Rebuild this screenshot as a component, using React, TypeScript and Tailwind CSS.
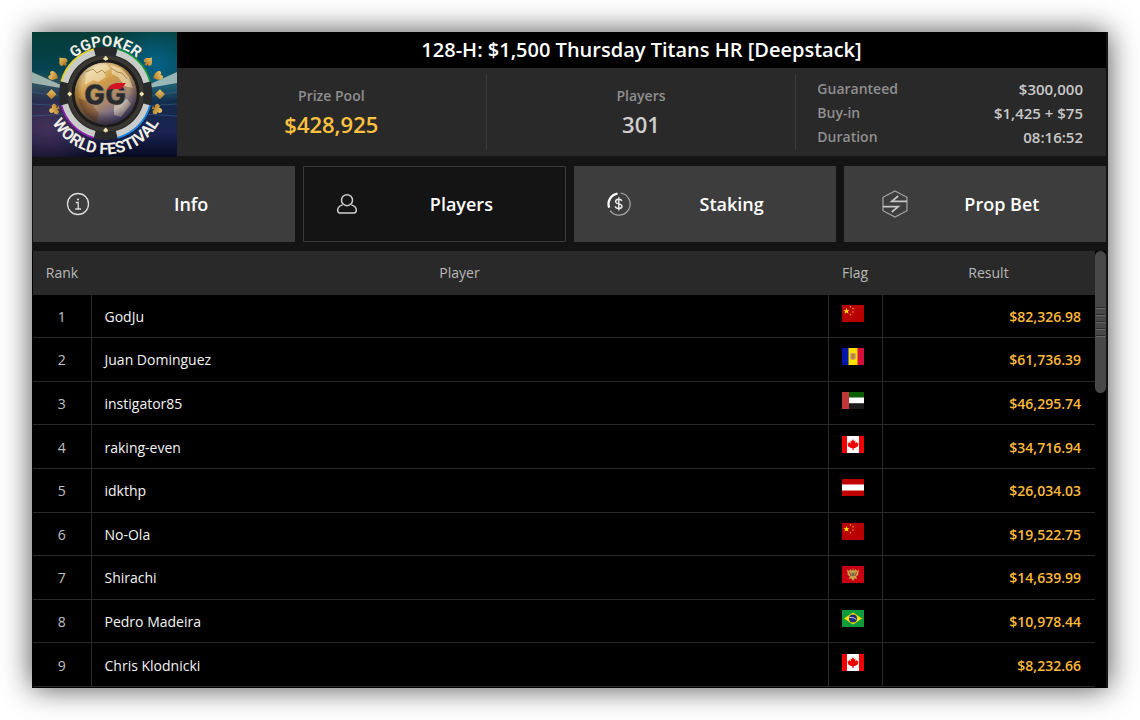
import React from "react";

type FlagCode = "cn" | "ad" | "ae" | "ca" | "at" | "me" | "br";

interface PlayerRow {
  rank: number;
  name: string;
  flag: FlagCode;
  result: string;
}

const players: PlayerRow[] = [
  { rank: 1, name: "GodJu", flag: "cn", result: "$82,326.98" },
  { rank: 2, name: "Juan Dominguez", flag: "ad", result: "$61,736.39" },
  { rank: 3, name: "instigator85", flag: "ae", result: "$46,295.74" },
  { rank: 4, name: "raking-even", flag: "ca", result: "$34,716.94" },
  { rank: 5, name: "idkthp", flag: "at", result: "$26,034.03" },
  { rank: 6, name: "No-Ola", flag: "cn", result: "$19,522.75" },
  { rank: 7, name: "Shirachi", flag: "me", result: "$14,639.99" },
  { rank: 8, name: "Pedro Madeira", flag: "br", result: "$10,978.44" },
  { rank: 9, name: "Chris Klodnicki", flag: "ca", result: "$8,232.66" },
];

const flagNames: Record<FlagCode, string> = {
  cn: "China",
  ad: "Andorra",
  ae: "United Arab Emirates",
  ca: "Canada",
  at: "Austria",
  me: "Montenegro",
  br: "Brazil",
};

const flagArt: Record<FlagCode, React.ReactNode> = {
  cn: (
    <>
      <rect width="22" height="17" fill="#b80000" />
      <path d="M4.500 3l.9 2.200h2.200l-1.700 1.300.6 2.200-2-1.300-2 1.300.6-2.200-1.700-1.300h2.200z" fill="#ffe000" />
      <g fill="#e8b000">
        <circle cx="8.500" cy="1.700" r=".8" />
        <circle cx="11" cy="3.800" r=".8" />
        <circle cx="11" cy="7" r=".8" />
        <circle cx="8.500" cy="9.800" r=".8" />
      </g>
    </>
  ),
  ad: (
    <>
      <rect width="22" height="17" fill="#ffe100" />
      <rect width="6.500" height="17" fill="#0018a8" />
      <rect x="15.500" width="6.500" height="17" fill="#d50f3c" />
      <rect x="8.200" y="5" width="5.600" height="6.500" rx="1.500" fill="#c89a5c" />
      <path d="M9.500 7h3M9.500 9.500h3M11 5.500v6" stroke="#a06a3c" strokeWidth=".7" />
    </>
  ),
  ae: (
    <>
      <rect width="22" height="6" fill="#0a5c00" />
      <rect y="5.500" width="22" height="6" fill="#fff" />
      <rect y="11.500" width="22" height="5.500" fill="#1b1b1b" />
      <rect width="7" height="17" fill="#c03535" />
    </>
  ),
  ca: (
    <>
      <rect width="22" height="17" fill="#fff" />
      <rect width="5" height="17" fill="#f00000" />
      <rect x="17" width="5" height="17" fill="#f00000" />
      <path d="M11 3l1.200 2.200 1.300-.6-.3 2.600L15 6l.5 1.300 1.300.2-1 1.800.6.7-3.400 2-1.400.2V14h-1.200v-1.800l-1.400-.2-3.400-2 .6-.7-1-1.800 1.300-.2L7 6l1.800 1.200-.3-2.600 1.300.6z" fill="#f00000" />
    </>
  ),
  at: (
    <>
      <rect width="22" height="17" fill="#c00000" />
      <rect y="5.500" width="22" height="6" fill="#fff" />
    </>
  ),
  me: (
    <>
      <rect width="22" height="17" fill="#c80012" />
      <path d="M5 3.500l2 1.500 1.500-2L10 5l1-3 1 3 1.500-2L15 5l2-1.500-.8 5.500-2 1.500 1 2.500-2.500-.5L11 15l-1.700-2.500-2.500.5 1-2.500-2-1.500z" fill="#c9a04a" />
      <path d="M7.500 6l1.500 4M14.500 6L13 10" stroke="#c80012" strokeWidth=".7" />
      <rect x="9.700" y="6.800" width="2.600" height="3.200" fill="#55705e" />
    </>
  ),
  br: (
    <>
      <rect width="22" height="17" fill="#0f9a3c" />
      <path d="M11 2.500l9 6-9 6-9-6z" fill="#f8e000" />
      <circle cx="11" cy="8.500" r="4" fill="#1f2c7a" />
      <path d="M7.300 7.600c2.500-.5 5 .1 7 2" stroke="#d5dcf0" strokeWidth=".9" fill="none" />
    </>
  ),
};

function Flag({ code }: { code: FlagCode }) {
  return (
    <svg className="block h-[17px] w-[22px]" viewBox="0 0 22 17" role="img" aria-label={flagNames[code]}>
      {flagArt[code]}
    </svg>
  );
}

const heart = "M0 4.500C-5.500.5-4.500-4-2-4-.8-4-.2-3 0-2.400.2-3 .8-4 2-4 4.500-4 5.500.5 0 4.500z";
const spade = "M0-5C1.500-2.500 4.500-1 4.500 1.300 4.500 3.800 1.500 4 .6 2.400L1.600 5h-3.200l1-2.600C-1.500 4-4.500 3.800-4.500 1.300-4.500-1-1.500-2.500 0-5z";
const diamond = "M0-5L5 0 0 5-5 0z";
const club = "M0-4.800a2.300 2.300 0 0 1 2 3.500A2.300 2.300 0 1 1 .7 2.200L1.500 4.800h-3L-.7 2.200A2.300 2.300 0 1 1-2-1.300 2.300 2.300 0 0 1 0-4.800z";

const rimArcs = [
  { d: "M32.600 50.400A42.500 42.500 0 0 1 62.700 20.300", edge: "M29.300 49.500A46 46 0 0 1 61.800 17", color: "#e4d12a" },
  { d: "M84.700 20.300A42.500 42.500 0 0 1 114.800 50.400", edge: "M85.600 17A46 46 0 0 1 118.100 49.500", color: "#169a35" },
  { d: "M114.800 72.400A42.500 42.500 0 0 1 84.700 102.500", edge: "M118.100 73.300A46 46 0 0 1 85.600 105.800", color: "#1684e0" },
  { d: "M62.700 102.500A42.500 42.500 0 0 1 32.600 72.400", edge: "M61.800 105.800A46 46 0 0 1 29.300 73.300", color: "#8a1fae" },
];

const suits = [
  { d: spade, left: "translate(30.700 29.300) rotate(-42)", right: "translate(116.700 29.300) rotate(42)" },
  { d: heart, left: "translate(21.500 44) rotate(-66) scale(1.100)", right: "translate(125.900 44) rotate(66) scale(1.100)" },
  { d: diamond, left: "translate(19.500 62.300)", right: "translate(127.900 62.300)" },
  { d: club, left: "translate(22.300 77.500) rotate(-112) scale(1.100)", right: "translate(125.100 77.500) rotate(112) scale(1.100)" },
];

function FestivalLogo() {
  return (
    <svg className="block h-[125px] w-[145px] shrink-0" viewBox="0 0 145 125" role="img" aria-label="GGPoker World Festival">
      <defs>
        <linearGradient id="sky" x1="0" y1="0" x2="0" y2="1">
          <stop offset="0" stopColor="#053c36" />
          <stop offset=".3" stopColor="#064350" />
          <stop offset=".43" stopColor="#2c5864" />
          <stop offset=".55" stopColor="#142a48" />
          <stop offset=".8" stopColor="#1b2352" />
          <stop offset="1" stopColor="#060a22" />
        </linearGradient>
        <radialGradient id="purple" cx=".1" cy=".75" r=".4">
          <stop offset="0" stopColor="#4d3358" stopOpacity=".8" />
          <stop offset="1" stopColor="#4d3358" stopOpacity="0" />
        </radialGradient>
        <radialGradient id="blue" cx=".85" cy=".25" r=".35">
          <stop offset="0" stopColor="#046a94" stopOpacity=".8" />
          <stop offset="1" stopColor="#046a94" stopOpacity="0" />
        </radialGradient>
        <linearGradient id="globe" x1=".2" y1="0" x2=".75" y2="1">
          <stop offset="0" stopColor="#f0e0b4" />
          <stop offset=".35" stopColor="#d09c48" />
          <stop offset=".62" stopColor="#a8886c" />
          <stop offset="1" stopColor="#4450a8" />
        </linearGradient>
        <radialGradient id="shade" cx=".5" cy=".42" r=".58">
          <stop offset=".65" stopColor="#20100a" stopOpacity="0" />
          <stop offset="1" stopColor="#20100a" stopOpacity=".65" />
        </radialGradient>
        <linearGradient id="gold" x1="0" y1="0" x2="0" y2="1">
          <stop offset="0" stopColor="#ecc466" />
          <stop offset="1" stopColor="#b07a26" />
        </linearGradient>
        <path id="arcTop" d="M26.700 61.300a47 47 0 0 1 94 0" />
        <path id="arcBottom" d="M12.700 61.300a61 61 0 0 0 122 0" />
      </defs>
      <rect width="145" height="125" fill="url(#sky)" />
      <rect width="145" height="125" fill="url(#purple)" />
      <rect width="145" height="125" fill="url(#blue)" />
      <path d="M0 40l40 18-40-7zM145 40l-40 18 40-7z" fill="#dfe8d8" opacity=".65" />
      <path d="M0 60l34 5M0 72l34 2M145 60l-34 5M145 72l-34 2M0 84l34-2M145 84l-34-2" stroke="#3c6a94" opacity=".5" />
      <circle cx="73.700" cy="61.400" r="42" fill="#161718" stroke="#28292a" strokeWidth="9" />
      {rimArcs.map((arc) => (
        <g key={arc.color} fill="none">
          <path d={arc.d} stroke="#c9cbc9" strokeWidth="7" />
          <path d={arc.edge} stroke={arc.color} strokeWidth="1.800" />
        </g>
      ))}
      <circle cx="73.700" cy="61.400" r="36" fill="#1c1c1c" stroke="#3a3632" strokeWidth="4" />
      <circle cx="73.700" cy="61.400" r="31" fill="url(#globe)" />
      <path d="M54 40c6-8 14-10 20-8l4 5-6 3 2 5-8 5-5-2-8 5zM79 33l10 3 8 9 4 11-8-2-7-9-6-3zM82 70l13-3 4 5-10 13-7-2z" fill="#f8ecc8" opacity=".55" />
      <path d="M54 40l7-3 4 4 5-3 3 3M79 36l6 4 5 1 5 6" stroke="#8a6428" strokeWidth=".8" fill="none" opacity=".8" />
      <path d="M46 66l12 4 9 12-3 8c-9-4-15-12-18-24z" fill="#7c4a1c" opacity=".5" />
      <circle cx="73.700" cy="61.400" r="31" fill="url(#shade)" />
      <g fill="#f3e3b0">
        <path d={club} transform="translate(73.700 26.300) scale(.5)" />
        <path d={diamond} transform="translate(37.700 62) scale(.5)" />
        <path d={diamond} transform="translate(109.700 62) scale(.5)" />
        <path d={spade} transform="translate(73.700 98) scale(.5)" />
      </g>
      {suits.map((suit) => (
        <g key={suit.left} fill="url(#gold)">
          <path d={suit.d} transform={suit.left} />
          <path d={suit.d} transform={suit.right} />
        </g>
      ))}
      <text x="73" y="73" textAnchor="middle" fontFamily="Inter, sans-serif" fontWeight="900" fontSize="28" fill="#2b2a2d" stroke="#8c7f72" strokeWidth=".6">
        GG
      </text>
      <path d="M75 58l4-5 5-2h10l-5 6h-9z" fill="#d21522" />
      <g fontFamily="Roboto, sans-serif" fontWeight="700" fill="#f1efe6" textAnchor="middle">
        <text fontSize="15">
          <textPath href="#arcTop" startOffset="50%">GGPOKER</textPath>
        </text>
        <text fontSize="16">
          <textPath href="#arcBottom" startOffset="50%">WORLD FESTIVAL</textPath>
        </text>
      </g>
    </svg>
  );
}

function InfoIcon() {
  return (
    <svg className="size-6" viewBox="-12 -12 24 24" fill="none" stroke="#dcdcdc" strokeWidth="1.300" aria-hidden="true">
      <circle r="10.500" />
      <path d="M-2.300-1.500H.2V5M-2.800 5h5.800" />
      <circle cy="-4.500" r="1.100" fill="#dcdcdc" stroke="none" />
    </svg>
  );
}

function PlayersIcon() {
  return (
    <svg className="size-6" viewBox="-11 -12 24 24" fill="none" stroke="#cfcfcf" strokeWidth="1.500" strokeLinejoin="round" aria-hidden="true">
      <circle cy="-3.800" r="5.500" />
      <path d="M-4.300 .9C-7.300 1.700-9.300 3.700-9.300 6.200c0 1.700.9 2.700 2.300 2.700H7c1.400 0 2.300-1 2.300-2.700C9.300 3.700 7.300 1.700 4.300.9" />
    </svg>
  );
}

function StakingIcon() {
  return (
    <svg className="size-6" viewBox="-12 -12 24 24" fill="none" aria-hidden="true">
      <path d="M1.500-11A11.100 11.100 0 1 1-8.900 6.600" stroke="#a8a8a8" strokeWidth="1.200" />
      <path d="M-9.800 3.600A10.400 10.400 0 0 1-1.500-10.300" stroke="#fff" strokeWidth="2.300" />
      <path d="M2.900-3C2.500-4.200 1.200-4.700-.3-4.700-2-4.700-3.400-4-3.400-2.500c0 3.200 6.400 1.500 6.400 4.700C3 3.700 1.600 4.500-.2 4.500c-1.900 0-3.200-.8-3.500-2.200M-.2-6.800V6.600" stroke="#f0f0f0" strokeWidth="1.400" />
    </svg>
  );
}

function PropBetIcon() {
  return (
    <svg className="size-7" viewBox="-14 -14 28 28" fill="none" aria-hidden="true">
      <path d="M0-13L12-6.700V6.700L0 13-12 6.700V-6.700z" stroke="#a6a6a6" strokeWidth="1.200" />
      <path d="M12-2.700H-3.200L3.200-8M-12 2.700H3.200L-3.200 8" stroke="#c6c6c6" strokeWidth="1.700" />
    </svg>
  );
}

const tabs = [
  { label: "Info", icon: <InfoIcon />, active: false },
  { label: "Players", icon: <PlayersIcon />, active: true },
  { label: "Staking", icon: <StakingIcon />, active: false },
  { label: "Prop Bet", icon: <span className="pl-3"><PropBetIcon /></span>, active: false },
];

const details = [
  { label: "Guaranteed", value: "$300,000" },
  { label: "Buy-in", value: "$1,425 + $75" },
  { label: "Duration", value: "08:16:52" },
];

export default function App() {
  return (
    <div className="flex h-screen bg-white p-8 font-['Open_Sans','Noto_Sans',sans-serif]">
      <main className="flex min-w-0 flex-1 flex-col overflow-hidden bg-[#141414] pr-0.5 shadow-[0_0_28px_rgba(0,0,0,0.7)]">
        <header className="flex">
          <FestivalLogo />
          <div className="flex min-w-0 flex-1 flex-col pb-px">
            <h1 className="bg-black text-center text-xl leading-9 font-semibold text-white">
              128-H: $1,500 Thursday Titans HR [Deepstack]
            </h1>
            <div className="grid flex-1 grid-cols-3 bg-[#292929] py-1.5">
              <dl className="flex flex-col items-center justify-center border-r border-[#3a3a3a] font-semibold">
                <dt className="text-sm leading-6 text-[#8f8f8f]">Prize Pool</dt>
                <dd className="text-[22px] leading-8 text-[#fdc142]">$428,925</dd>
              </dl>
              <dl className="flex flex-col items-center justify-center border-r border-[#3a3a3a] font-semibold">
                <dt className="text-sm leading-6 text-[#8f8f8f]">Players</dt>
                <dd className="text-[22px] leading-8 text-[#cfcfcf]">301</dd>
              </dl>
              <dl className="flex flex-col justify-center pt-0.5 pr-[23px] pl-[21px] text-sm leading-6 font-semibold">
                {details.map((item) => (
                  <div key={item.label} className="flex justify-between leading-6">
                    <dt className="text-[#8f8f8f]">{item.label}</dt>
                    <dd className="text-[15px] text-[#c8c8c8]">{item.value}</dd>
                  </div>
                ))}
              </dl>
            </div>
          </div>
        </header>

        <nav className="grid grid-cols-4 gap-2 py-[9px] pl-px">
          {tabs.map((tab) => (
            <button
              key={tab.label}
              type="button"
              aria-pressed={tab.active}
              className={
                tab.active
                  ? "flex h-[76px] items-center border border-[#3a3a3a] bg-[#141414] pr-[34px] text-lg font-semibold text-white"
                  : "flex h-[76px] items-center border border-[#3d3d3d] bg-[#3d3d3d] pr-[34px] text-lg font-semibold text-white"
              }
            >
              <span className="flex w-[88px] shrink-0 justify-center">{tab.icon}</span>
              <span className="flex-1 text-center">{tab.label}</span>
            </button>
          ))}
        </nav>

        <section className="flex min-h-0 flex-1 bg-black pb-px pl-px">
          <table className="h-full flex-1 table-fixed border-collapse text-sm">
            <colgroup>
              <col className="w-[58px]" />
              <col />
              <col className="w-[54px]" />
              <col className="w-[213px]" />
            </colgroup>
            <thead>
              <tr className="h-11 bg-[#292929] text-[#b8b8b8]">
                <th className="p-0 font-normal">Rank</th>
                <th className="p-0 font-normal">Player</th>
                <th className="p-0 font-normal">Flag</th>
                <th className="p-0 font-normal">Result</th>
              </tr>
            </thead>
            <tbody>
              {players.map((player) => (
                <tr key={player.rank} className="border-b border-[#292929]">
                  <td className="border-r border-[#292929] px-0 pt-0.5 pb-0 text-center text-[#c0c0c0]">{player.rank}</td>
                  <td className="border-r border-[#292929] pt-0.5 pr-0 pb-0 pl-[13px] text-[#f4f4f4]">{player.name}</td>
                  <td className="border-r border-[#292929] pt-0 pr-0 pb-[5px] pl-[13px]">
                    <Flag code={player.flag} />
                  </td>
                  <td className="pt-0.5 pr-3.5 pb-0 pl-0 text-right font-semibold text-[#fdb93a]">{player.result}</td>
                </tr>
              ))}
            </tbody>
          </table>
          <div className="w-[11px] shrink-0" aria-hidden="true">
            <div className="flex h-[142px] flex-col items-center justify-center gap-[5px] rounded-md bg-[#484848] px-px">
              <span className="h-0.5 w-full border-t border-b border-t-[#2b2b2b] border-b-[#686868]" />
              <span className="h-0.5 w-full border-t border-b border-t-[#2b2b2b] border-b-[#686868]" />
              <span className="h-0.5 w-full border-t border-b border-t-[#2b2b2b] border-b-[#686868]" />
              <span className="h-0.5 w-full border-t border-b border-t-[#2b2b2b] border-b-[#686868]" />
              <span className="h-0.5 w-full border-t border-b border-t-[#2b2b2b] border-b-[#686868]" />
            </div>
          </div>
        </section>
      </main>
    </div>
  );
}
